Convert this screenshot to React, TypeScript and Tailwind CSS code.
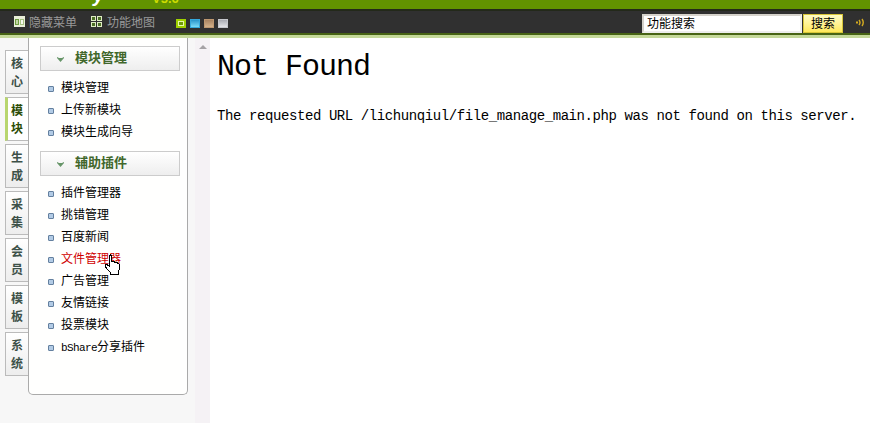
const tabs = ['核心', '模块', '生成', '采集', '会员', '模板', '系统'];

const groups = [
  { title: '模块管理', items: ['模块管理', '上传新模块', '模块生成向导'] },
  {
    title: '辅助插件',
    items: ['插件管理器', '挑错管理', '百度新闻', '文件管理器', '广告管理', '友情链接', '投票模块', 'bShare分享插件'],
  },
];

const swatches = [
  'border-[#9fd000] bg-[#9fd000]',
  'border-[#35a9dc] bg-linear-to-b from-[#2796cb] to-[#7bdcf8]',
  'border-[#bd9770] bg-linear-to-b from-[#a88361] to-[#d4b28a]',
  'border-[#c5c7cc] bg-linear-to-b from-[#a9abb2] to-[#e4e5e8]',
];

function MenuIcon() {
  return (
    <svg className="-mt-[3px]" width="11" height="11" viewBox="0 0 11 11" shapeRendering="crispEdges">
      <rect width="11" height="11" fill="#e9efd8" />
      <rect x="1" y="3" width="4" height="6" fill="#6d9c3f" />
      <rect x="2" y="4" width="2" height="4" fill="#c4d6a8" />
      <rect x="6" y="3" width="4" height="6" fill="#a6c383" />
      <rect x="7" y="4" width="2" height="4" fill="#f6f8ee" />
    </svg>
  );
}

function MapIcon() {
  return (
    <svg className="-mt-[3px]" width="11" height="11" viewBox="0 0 11 11" shapeRendering="crispEdges">
      <path d="M0 0h5v5H0zM6 0h5v5H6zM0 6h5v5H0zM6 6h5v5H6z" fill="#dfedc4" />
      <path d="M1 1h3v3H1zM7 1h3v3H7zM1 7h3v3H1zM7 7h3v3H7z" fill="#4c6f25" />
    </svg>
  );
}

function Hand() {
  return (
    <svg className="absolute top-[3px] left-[43px]" width="17" height="22" viewBox="0 0 17 22" shapeRendering="crispEdges">
      <path
        d="M5.5 12.5V2L6.5 1L7.5 2V7.5L10 7.5L11 8.5L13 8.5L14 9.5L15.5 10.5V15.5L14 18V20.5H6.5V18.5L3.5 15.5L1 12V10.5H3L5.5 12.5Z"
        fill="#fff"
        stroke="#000"
      />
    </svg>
  );
}

function TopBar() {
  return (
    <header className="h-[38px] shrink-0">
      <div className="flex h-[9px] items-start bg-[#629300] pl-[93px]">
        <span className="-mt-[15px] w-[59px] text-[20px] leading-[20px] font-bold text-white italic">y</span>
        <span className="-mt-[7px] text-[13px] leading-[12px] font-bold text-[#cddb00]">V5.6</span>
      </div>
      <div className="flex h-[29px] items-center border-t-2 border-b-3 border-t-[#23291a] border-b-[#c5d99a] bg-[#303030] pl-[14px] shadow-[inset_0_-2px_0_#486415]">
        <MenuIcon />
        <span className="ml-[4px] w-[62px] text-[#999]">隐藏菜单</span>
        <MapIcon />
        <span className="ml-[5px] w-[69px] text-[#999]">功能地图</span>
        <div className="flex gap-1">
          {swatches.map((tone, i) => (
            <span key={tone} className={`flex h-[9px] w-[10px] items-center justify-center border ${tone}`}>
              {i === 0 && <i className="h-[5px] w-[6px] border border-[#e8f8a8] bg-[#6e9a08]" />}
            </span>
          ))}
        </div>
        <div className="ml-auto flex h-[19px] w-[160px] items-center border-2 border-[#d5d2cb] border-r-[#eee] border-b-[#eee] bg-white pt-px pl-[3px] text-black">
          功能搜索
        </div>
        <button className="ml-px flex h-[19px] w-[40px] items-center justify-center border border-[#d8c638] bg-linear-to-b from-[#fffcc4] to-[#ffe958] pt-px text-black">
          搜索
        </button>
        <svg className="-mt-px mr-[5px] ml-[13px]" width="9" height="9" viewBox="0 0 9 9" fill="none" stroke="#d3aa20">
          <path d="M0 4.5h2" strokeWidth="2" />
          <path d="M3 2q2 2.5 0 5M6 1q2.5 3.5 0 7" strokeWidth="1.4" />
        </svg>
      </div>
    </header>
  );
}

function Sidebar() {
  return (
    <aside className="flex w-[195px] shrink-0 items-start bg-[#f7f7f7]">
      <nav className="flex flex-col gap-[3px] pt-3 pl-[5px]">
        {tabs.map((tab) => (
          <div
            key={tab}
            className={`flex h-[44px] w-[23px] flex-col items-center justify-center border border-r-0 border-[#bbb] pt-px text-[12px] leading-[18px] font-bold ${
              tab === '模块'
                ? 'border-l-3 border-l-[#b8d66e] bg-white pr-[2px] text-[#2b4b05]'
                : 'bg-linear-to-b from-white to-[#ededed] text-[#3d5148]'
            }`}
          >
            {[...tab].map((word) => (
              <span key={word}>{word}</span>
            ))}
          </div>
        ))}
      </nav>
      <section className="h-[357px] w-[160px] rounded-b-[5px] border border-t-0 border-[#aaa] bg-[#fffffe] pt-2 pr-[7px] pl-[11px]">
        {groups.map((group) => (
          <div key={group.title} className="mb-[8px]">
            <h2 className="flex h-[25px] items-center border border-[#ccc] bg-linear-to-b from-white to-[#eee] pl-4 text-[13px] font-bold text-[#41672b]">
              <svg className="mt-[2px] mr-[11px]" width="7" height="5" viewBox="0 0 7 5" fill="#669568">
                <path d="M0 0l2 1h3l2-1v1L3.5 5 0 1z" />
              </svg>
              <span className="-mt-[2px]">{group.title}</span>
            </h2>
            <ul className="pt-[6px]">
              {group.items.map((item) => (
                <li key={item} className="flex h-[22px] items-center pl-2">
                  <i className="mt-[2px] mr-[7px] size-[6px] rounded-[1px] border border-[#64809f] bg-[#b2cbe5]" />
                  <span className={`relative whitespace-nowrap ${item === '文件管理器' ? 'text-[#d00000]' : 'text-black'}`}>
                    {item.startsWith('bShare') ? (
                      <>
                        <span className="font-['Liberation_Mono','Noto_Sans_CJK_SC',monospace] text-[11px] tracking-[-0.6px]">bShare</span>
                        {item.slice(6)}
                      </>
                    ) : (
                      item
                    )}
                    {item === '文件管理器' && <Hand />}
                  </span>
                </li>
              ))}
            </ul>
          </div>
        ))}
      </section>
    </aside>
  );
}

export default function App() {
  return (
    <div className="flex h-[423px] w-[870px] flex-col overflow-hidden bg-white font-['Liberation_Sans','Noto_Sans_CJK_SC',sans-serif] text-[12px] leading-[16px]">
      <TopBar />
      <div className="flex min-h-0 flex-1">
        <Sidebar />
        <div className="flex w-[15px] shrink-0 justify-center bg-[#f5f2f5] pt-[7px]">
          <svg width="8" height="5" viewBox="0 0 8 5" fill="#a5a2a5">
            <path d="M4 0l4 4H0z" />
          </svg>
        </div>
        <main className="min-w-0 flex-1 pt-[9px] pl-[7px] font-['Liberation_Mono',monospace] text-black">
          <h1 className="text-[30px] leading-[40px] tracking-[-1px] whitespace-nowrap">Not Found</h1>
          <p className="mt-[21px] text-[14px] leading-4 tracking-[-0.41px] whitespace-nowrap">
            The requested URL /lichunqiul/file_manage_main.php was not found on this server.
          </p>
        </main>
      </div>
    </div>
  );
}
